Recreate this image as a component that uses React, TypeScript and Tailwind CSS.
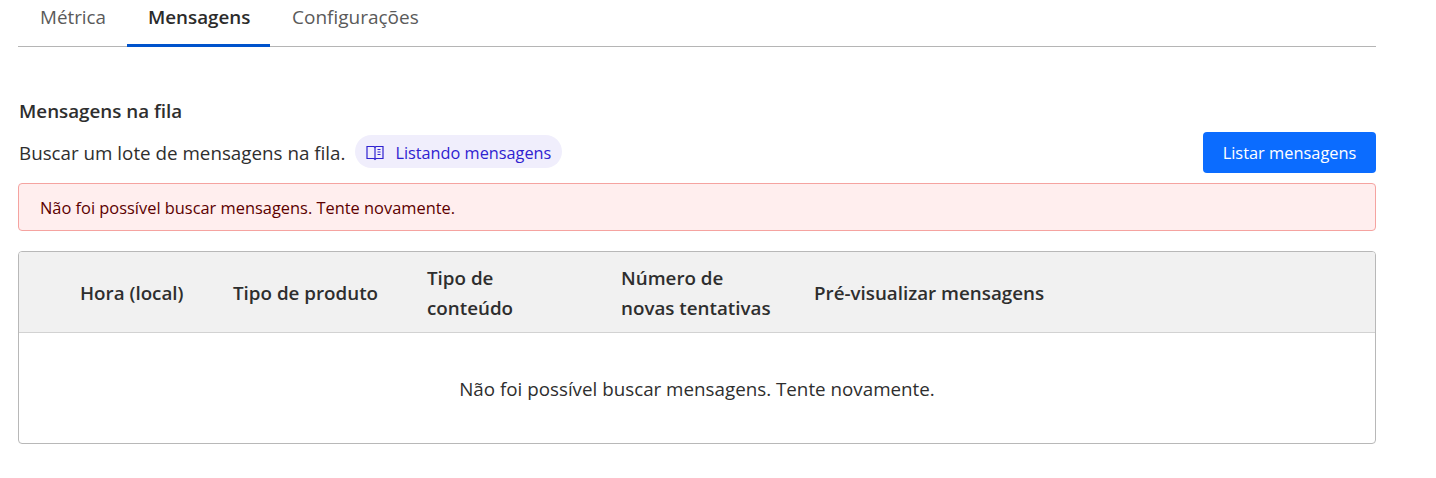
const font = "font-['Open_Sans',sans-serif]";

function BookIcon() {
  return (
    <svg className="mt-[2px]" width="18" height="16" viewBox="0 0 18 16" fill="none" stroke="#2f22d0" strokeWidth="1.2">
      <path d="M1 1.5h7l1 1 1-1h7v12h-7l-1 1-1-1H1z" />
      <path d="M9 2.5v11.5" />
      <path d="M11.5 4.5h3M11.5 7h3M11.5 9.5h3" />
    </svg>
  );
}

function Tab({ label, active, className }: { label: string; active?: boolean; className: string }) {
  return (
    <div className={`h-[47px] flex items-center pb-[10px] border-b-[3px] ${className} ${active ? "border-[#0053cc] font-semibold text-[#2b2b2b]" : "border-transparent text-[#5a5a5a]"}`}>
      {label}
    </div>
  );
}

export default function App() {
  return (
    <div className={`w-[1436px] h-[478px] bg-white overflow-hidden pl-[18px] text-[#2e2e2e] ${font}`}>
      <div className="w-[1358px]">
        <div className="flex border-b border-[#b5b5b5] h-[47px]">
          <Tab label="Métrica" className="pl-[22px] pr-[21px] text-[18.8px]" />
          <Tab label="Mensagens" active className="px-[21px] text-[18.8px] w-[143px]" />
          <Tab label="Configurações" className="px-[22px] text-[19px]" />
        </div>

        <div className="mt-[52px] pl-px text-[18.8px] leading-[24px] font-semibold">Mensagens na fila</div>

        <div className="mt-[9px] flex items-center justify-between h-[41px]">
          <div className="flex items-center">
            <span className="text-[18.8px] pl-px pt-[2px]">Buscar um lote de mensagens na fila.</span>
            <span className="ml-[10px] mb-[2px] h-[33px] w-[207px] rounded-full bg-[#f0eefc] flex items-center pl-[11px] gap-[11px] text-[16.3px] text-[#2f22d0]">
              <BookIcon />
              <span className="pt-[4px]">Listando mensagens</span>
            </span>
          </div>
          <button className="w-[173px] h-[41px] pt-[2px] rounded-[4px] bg-[#0b6cff] text-white text-[16.4px]">Listar mensagens</button>
        </div>

        <div className="mt-[10px] h-[48px] pt-[2px] rounded-[4px] border border-[#f5a3a0] bg-[#ffeeee] flex items-center pl-[21px] text-[16.4px] text-[#5c0000]">
          Não foi possível buscar mensagens. Tente novamente.
        </div>

        <div className="mt-[20px] h-[193px] rounded-[4px] border border-[#b8b8b8] overflow-hidden">
          <div className="h-[81px] pt-[2px] bg-[#f1f1f1] border-b border-[#d2d2d2] flex items-center pl-[41px] font-semibold text-[18.8px] leading-[30px] text-[#2e2e2e]">
            <div className="w-[153px] pl-[20px]">Hora (local)</div>
            <div className="w-[194px] pl-[20px]">Tipo de produto</div>
            <div className="w-[194px] pl-[20px]">Tipo de<br />conteúdo</div>
            <div className="w-[193px] pl-[20px]">Número de<br />novas tentativas</div>
            <div className="pl-[20px]">Pré-visualizar mensagens</div>
          </div>
          <div className="h-[110px] pt-[2px] flex items-center justify-center text-[18.8px]">
            Não foi possível buscar mensagens. Tente novamente.
          </div>
        </div>
      </div>
    </div>
  );
}
